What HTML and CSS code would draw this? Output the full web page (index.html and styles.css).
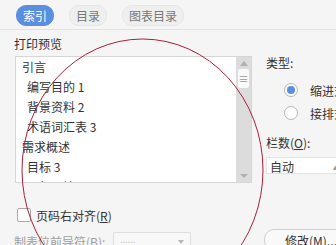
FILE: index.html
```html
<!DOCTYPE html>
<html lang="zh">
<head>
    <meta charset="UTF-8">
    <title>索引</title>
    <link rel="stylesheet" href="styles.css">
</head>
<body>
    <div class="tabs">
        <span class="tab active">索引</span>
        <span class="tab">目录</span>
        <span class="tab">图表目录</span>
    </div>
    <div class="main">
        <div class="preview">
            <div class="group-title">打印预览</div>
            <div class="listbox">
                <ul class="entries">
                    <li class="lv1">引言</li>
                    <li class="lv2">编写目的 1</li>
                    <li class="lv2">背景资料 2</li>
                    <li class="lv2">术语词汇表 3</li>
                    <li class="lv1">需求概述</li>
                    <li class="lv2">目标 3</li>
                    <li class="lv2">运行环境 4</li>
                </ul>
                <div class="scrollbar">
                    <span class="arrow up"></span>
                    <span class="thumb">≡</span>
                    <span class="arrow down"></span>
                </div>
            </div>
            <label class="check"><span class="box"></span>页码右对齐(<u>R</u>)</label>
            <div class="leader">
                <span>制表位前导符(B):</span>
                <span class="select disabled">......<span class="caret"></span></span>
            </div>
        </div>
        <div class="options">
            <div class="opt-title">类型:</div>
            <label class="radio"><span class="dot on"></span>缩进式</label>
            <label class="radio"><span class="dot"></span>接排式</label>
            <div class="opt-title cols">栏数(<u>O</u>):</div>
            <div class="spin">自动<span class="spin-arrows">▴</span></div>
            <button class="modify">修改(M)...</button>
        </div>
    </div>
    <svg class="mark" width="336" height="245" viewBox="0 0 336 245">
        <ellipse cx="142.5" cy="170" rx="120.5" ry="131" fill="none" stroke="#a8203a" stroke-width="1"/>
    </svg>
</body>
</html>
```
FILE: styles.css
```css
body {
    margin: 0;
    width: 336px;
    height: 245px;
    overflow: hidden;
    position: relative;
    background: #f5f5f5;
    font-family: 'Noto Sans CJK SC', 'Liberation Sans', sans-serif;
    font-size: 12px;
    color: #333;
}
.tabs {
    height: 30px;
    box-sizing: border-box;
    border-bottom: 1px solid #e2e2e2;
    display: flex;
    align-items: center;
    gap: 15px;
    padding: 1px 0 0 16px;
}
.tab {
    height: 19px;
    line-height: 19px;
    padding: 0 6px;
    border-radius: 10px;
    background: #efefef;
    border: 1px solid #e6e6e6;
    color: #777;
}
.tab.active {
    background: #5a8ee0;
    border-color: #5a8ee0;
    color: #fff;
}
.main {
    display: flex;
}
.preview {
    width: 252px;
    padding-left: 14px;
    box-sizing: border-box;
}
.group-title {
    margin-top: 6px;
    height: 20px;
    line-height: 16px;
}
.listbox {
    margin-left: 1px;
    width: 237px;
    height: 127px;
    box-sizing: border-box;
    border: 1px solid #d6d6d6;
    background: #fff;
    display: flex;
    overflow: hidden;
}
.entries {
    list-style: none;
    margin: 0;
    padding: 0;
    flex: 1;
}
.entries li {
    height: 20px;
    line-height: 20px;
    white-space: nowrap;
}
.lv1 { padding-left: 6px; }
.lv2 { padding-left: 11px; }
.scrollbar {
    width: 15px;
    background: #dcdcdc;
    display: flex;
    flex-direction: column;
    align-items: center;
}
.arrow {
    width: 0;
    height: 0;
    border-left: 4px solid transparent;
    border-right: 4px solid transparent;
}
.arrow.up {
    margin-top: 4px;
    border-bottom: 5px solid #b0b0b0;
}
.arrow.down {
    margin-top: auto;
    margin-bottom: 4px;
    border-top: 4px solid #b0b0b0;
}
.thumb {
    margin-top: 3px;
    width: 11px;
    height: 19px;
    background: #fafafa;
    border-radius: 2px;
    color: #999;
    font-size: 10px;
    line-height: 19px;
    text-align: center;
}
.check {
    display: flex;
    align-items: center;
    margin-top: 25px;
    margin-left: 3px;
    height: 14px;
}
.box {
    width: 12px;
    height: 12px;
    border: 1px solid #aaa;
    border-radius: 2px;
    background: #fff;
    margin-right: 5px;
}
.leader {
    display: flex;
    align-items: flex-start;
    margin-top: 10px;
    color: #a0a0a0;
}
.leader > span:first-child {
    margin-top: 1px;
}
.select {
    margin-left: 8px;
    width: 78px;
    height: 20px;
    box-sizing: border-box;
    border: 1px solid #dedede;
    border-radius: 2px;
    background: #f8f8f8;
    padding-left: 6px;
    color: #c0c0c0;
    font-size: 9px;
    position: relative;
}
.caret {
    position: absolute;
    right: 6px;
    top: 7px;
    border-left: 3px solid transparent;
    border-right: 3px solid transparent;
    border-top: 4px solid #b5b5b5;
}
.options {
    padding-left: 14px;
    flex: 1;
    white-space: nowrap;
}
.opt-title {
    margin-top: 26px;
    line-height: 14px;
}
.radio {
    display: flex;
    align-items: center;
    margin-left: 18px;
    height: 14px;
    margin-top: 9px;
}
.radio:first-of-type {
    margin-top: 13px;
}
.dot {
    width: 12px;
    height: 12px;
    border: 1px solid #b5b5b5;
    border-radius: 50%;
    background: #fff;
    margin-right: 12px;
    position: relative;
}
.dot.on::after {
    content: '';
    position: absolute;
    left: 2px;
    top: 2px;
    width: 8px;
    height: 8px;
    border-radius: 50%;
    background: #5a8ee0;
}
.opt-title.cols {
    margin-top: 16px;
}
.spin {
    margin-top: 7px;
    width: 80px;
    height: 17px;
    line-height: 17px;
    box-sizing: border-box;
    background: #fff;
    border: 1px solid #e4e4e4;
    padding-left: 3px;
    position: relative;
}
.spin-arrows {
    position: absolute;
    left: 66px;
    color: #999;
    font-size: 9px;
}
.modify {
    display: block;
    margin-top: 55px;
    margin-left: -2px;
    width: 90px;
    height: 22px;
    padding: 0 0 0 20px;
    text-align: left;
    border: 1px solid #d0d0d0;
    border-radius: 10px;
    background: #f9f9f9;
    font-family: inherit;
    font-size: 12px;
    color: #333;
}
.mark {
    position: absolute;
    left: 0;
    top: 0;
    pointer-events: none;
}
```
